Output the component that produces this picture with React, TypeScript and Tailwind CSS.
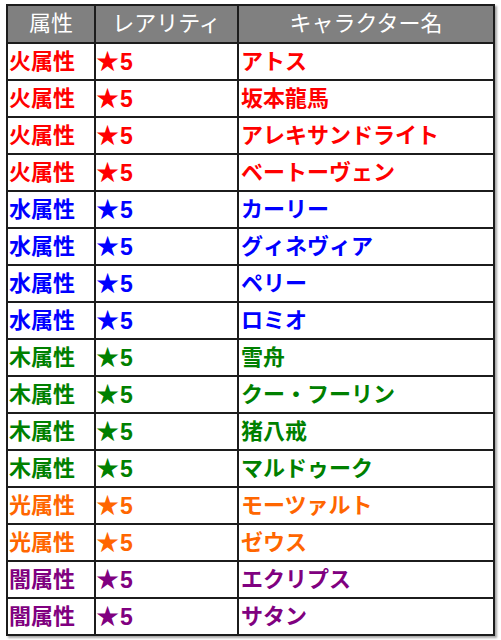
import React from "react";

type Row = { attr: string; name: string; color: string };

const rows: Row[] = [
  { attr: "火属性", name: "アトス", color: "text-[#ff0000]" },
  { attr: "火属性", name: "坂本龍馬", color: "text-[#ff0000]" },
  { attr: "火属性", name: "アレキサンドライト", color: "text-[#ff0000]" },
  { attr: "火属性", name: "ベートーヴェン", color: "text-[#ff0000]" },
  { attr: "水属性", name: "カーリー", color: "text-[#0000ff]" },
  { attr: "水属性", name: "グィネヴィア", color: "text-[#0000ff]" },
  { attr: "水属性", name: "ペリー", color: "text-[#0000ff]" },
  { attr: "水属性", name: "ロミオ", color: "text-[#0000ff]" },
  { attr: "木属性", name: "雪舟", color: "text-[#008000]" },
  { attr: "木属性", name: "クー・フーリン", color: "text-[#008000]" },
  { attr: "木属性", name: "猪八戒", color: "text-[#008000]" },
  { attr: "木属性", name: "マルドゥーク", color: "text-[#008000]" },
  { attr: "光属性", name: "モーツァルト", color: "text-[#ff6600]" },
  { attr: "光属性", name: "ゼウス", color: "text-[#ff6600]" },
  { attr: "闇属性", name: "エクリプス", color: "text-[#800080]" },
  { attr: "闇属性", name: "サタン", color: "text-[#800080]" },
];

export default function App() {
  return (
    <div className="w-[501px] h-[640px] bg-white pt-[4px] pl-[6px]">
      <table
        className="border-collapse w-[489px] shadow-[2px_2px_2px_rgba(0,0,0,0.35)] text-[22px] leading-none"
        style={{ fontFamily: '"Liberation Sans", "Noto Sans CJK JP", sans-serif' }}
      >
        <thead>
          <tr className="bg-[#808080] text-white">
            <th className="border-2 border-[#1c1c1c] h-[38px] w-[88px] font-normal">属性</th>
            <th className="border-2 border-[#1c1c1c] h-[38px] w-[143px] font-normal">レアリティ</th>
            <th className="border-2 border-[#1c1c1c] h-[38px] font-normal">キャラクター名</th>
          </tr>
        </thead>
        <tbody>
          {rows.map((r, i) => (
            <tr key={i} className={`${r.color} font-bold`}>
              <td className="border-2 border-[#1c1c1c] h-[37px] pl-[1px] whitespace-nowrap">{r.attr}</td>
              <td className="border-2 border-[#1c1c1c] h-[37px] pl-0 whitespace-nowrap">
                <span className="text-[28px] font-normal align-[-1px] ml-[-1px]" style={{ fontFamily: '"DejaVu Sans", sans-serif' }}>★</span>
                <span className="text-[23px]">5</span>
              </td>
              <td className="border-2 border-[#1c1c1c] h-[37px] pl-[2px] whitespace-nowrap">{r.name}</td>
            </tr>
          ))}
        </tbody>
      </table>
    </div>
  );
}
